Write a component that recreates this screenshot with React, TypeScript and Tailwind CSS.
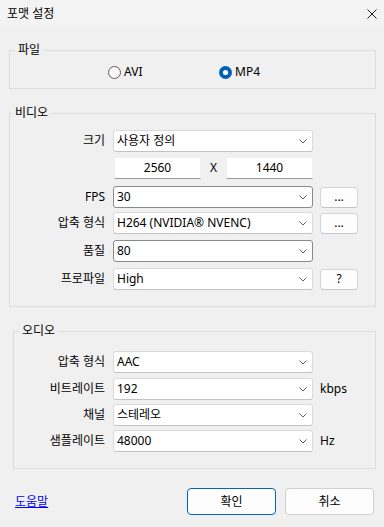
import { FC, ReactNode } from "react";

const Chevron: FC = () => (
  <svg width="8" height="5" viewBox="0 0 8 5" className="shrink-0">
    <path d="M0.5 0.5L4 4L7.5 0.5" fill="none" stroke="#5f5f5f" strokeWidth="1" />
  </svg>
);

const Combo: FC<{ value: string; dark?: boolean }> = ({ value, dark }) => (
  <div
    className={`flex h-[22px] w-[200px] items-center justify-between rounded-[3px] border bg-white pl-[3px] pr-[5px] ${
      dark ? "border-[#8a8a8a]" : "border-[#dadada] border-b-[#c2c2c2]"
    }`}
  >
    <span className="leading-[16px]">{value}</span>
    <Chevron />
  </div>
);

const SmallBtn: FC<{ children: ReactNode }> = ({ children }) => (
  <div className="ml-[7px] flex h-[21px] w-[38px] items-center justify-center rounded-[4px] border border-[#d5d5d5] border-b-[#c4c4c4] bg-[#fdfdfd] leading-[16px]">
    {children}
  </div>
);

const Row: FC<{ label: string; labelW: string; className?: string; children: ReactNode }> = ({
  label,
  labelW,
  className,
  children,
}) => (
  <div className={`flex h-[22px] items-center ${className ?? ""}`}>
    <div className={`${labelW} text-right leading-[16px]`}>{label}</div>
    <div className="ml-[8px] flex items-center">{children}</div>
  </div>
);

const Radio: FC<{ checked?: boolean }> = ({ checked }) =>
  checked ? (
    <svg width="13" height="13" viewBox="0 0 13 13" className="shrink-0">
      <circle cx="6.5" cy="6.5" r="6.5" fill="#005fb8" />
      <circle cx="6.5" cy="6.5" r="2.6" fill="#ffffff" />
    </svg>
  ) : (
    <svg width="13" height="13" viewBox="0 0 13 13" className="shrink-0">
      <circle cx="6.5" cy="6.5" r="6" fill="#f7f7f7" stroke="#5d5d5d" strokeWidth="1" />
    </svg>
  );

export default function App() {
  return (
    <div className="h-[527px] w-[384px] overflow-hidden bg-[#f0f0f0] font-['Noto_Sans','Noto_Sans_CJK_KR',sans-serif] text-[12px] text-black">
      {/* title bar */}
      <div className="flex h-[28px] items-center justify-between bg-[#f3f3f3] pl-[7px] pr-[7px]">
        <span className="leading-[16px]">포맷 설정</span>
        <svg width="10" height="10" viewBox="0 0 10 10">
          <path d="M0.5 0.5L9.5 9.5M9.5 0.5L0.5 9.5" stroke="#1b1b1b" strokeWidth="1" />
        </svg>
      </div>

      {/* 파일 */}
      <fieldset className="ml-[9px] mt-[14px] w-[367px] border border-[#dcdcdc]">
        <legend className="ml-[5px] px-[3px] leading-[16px]">파일</legend>
        <div className="mb-[8px] mt-[6px] flex h-[16px] items-center pl-[98px]">
          <div className="flex w-[111px] items-center">
            <Radio />
            <span className="ml-[3px] leading-[16px]">AVI</span>
          </div>
          <div className="flex items-center">
            <Radio checked />
            <span className="ml-[3px] leading-[16px]">MP4</span>
          </div>
        </div>
      </fieldset>

      {/* 비디오 */}
      <fieldset className="ml-[9px] mt-[16px] w-[367px] border border-[#dcdcdc] pb-[16px] pt-[9px]">
        <legend className="ml-[2px] px-[3px] leading-[16px]">비디오</legend>
        <Row label="크기" labelW="w-[95px]">
          <Combo value="사용자 정의" />
        </Row>
        <div className="ml-[104px] mt-[5px] flex h-[22px] items-center">
          <div className="flex h-[22px] w-[87px] items-center justify-center border border-[#f0f0f0] border-b-[#9a9a9a] bg-white leading-[16px]">
            2560
          </div>
          <div className="w-[25px] text-center leading-[16px]">X</div>
          <div className="flex h-[22px] w-[87px] items-center justify-center border border-[#f0f0f0] border-b-[#9a9a9a] bg-white leading-[16px]">
            1440
          </div>
        </div>
        <Row label="FPS" labelW="w-[95px]" className="mt-[7px]">
          <Combo value="30" dark />
          <SmallBtn>...</SmallBtn>
        </Row>
        <Row label="압축 형식" labelW="w-[95px]" className="mt-[4px]">
          <Combo value="H264 (NVIDIA® NVENC)" />
          <SmallBtn>...</SmallBtn>
        </Row>
        <Row label="품질" labelW="w-[95px]" className="mt-[6px]">
          <Combo value="80" dark />
        </Row>
        <Row label="프로파일" labelW="w-[95px]" className="mt-[6px]">
          <Combo value="High" />
          <SmallBtn>?</SmallBtn>
        </Row>
      </fieldset>

      {/* 오디오 */}
      <fieldset className="ml-[13px] mt-[16px] w-[363px] border border-[#dcdcdc] pb-[16px] pt-[12px]">
        <legend className="ml-[5px] px-[3px] leading-[16px]">오디오</legend>
        <Row label="압축 형식" labelW="w-[91px]">
          <Combo value="AAC" />
        </Row>
        <Row label="비트레이트" labelW="w-[91px]" className="mt-[5px]">
          <Combo value="192" />
          <span className="ml-[7px] leading-[16px]">kbps</span>
        </Row>
        <Row label="채널" labelW="w-[91px]" className="mt-[4px]">
          <Combo value="스테레오" />
        </Row>
        <Row label="샘플레이트" labelW="w-[91px]" className="mt-[4px]">
          <Combo value="48000" />
          <span className="ml-[7px] leading-[16px]">Hz</span>
        </Row>
      </fieldset>

      {/* footer */}
      <div className="mt-[19px] flex items-center pl-[15px] pr-[10px]">
        <a className="leading-[16px] text-[#0000ff] underline">도움말</a>
        <div className="ml-auto flex gap-[9px]">
          <div className="flex h-[27px] w-[89px] items-center justify-center rounded-[4px] border border-[#0067c0] bg-[#fdfdfd] leading-[16px]">
            확인
          </div>
          <div className="flex h-[27px] w-[89px] items-center justify-center rounded-[4px] border border-[#d0d0d0] bg-[#fdfdfd] leading-[16px]">
            취소
          </div>
        </div>
      </div>
    </div>
  );
}
